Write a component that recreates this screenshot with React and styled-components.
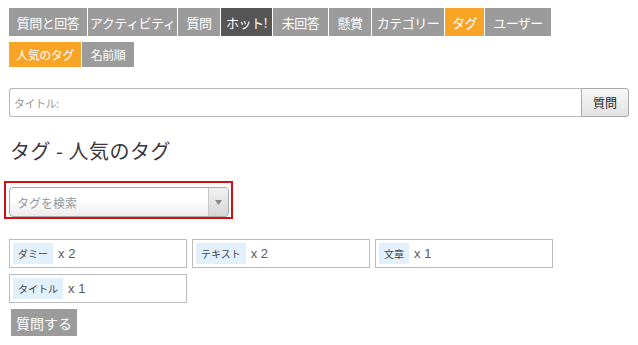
import React from "react";
import styled, { createGlobalStyle } from "styled-components";

const Global = createGlobalStyle`
  html, body { margin: 0; padding: 0; background: #fff; }
  body { font-family: "Noto Sans CJK JP", "Noto Sans", sans-serif; }
  * { box-sizing: border-box; }
`;

const Page = styled.div`
  padding: 8px 9px 0 9px;
  width: 638px;
  height: 345px;
  overflow: hidden;
`;

const NavRow = styled.div`
  display: flex;
  gap: 1px;
  margin-bottom: ${(p) => p.$mb || 0}px;
`;

const NavItem = styled.div`
  width: ${(p) => p.$w}px;
  height: ${(p) => p.$h}px;
  display: flex;
  align-items: center;
  justify-content: center;
  color: #fff;
  font-size: ${(p) => p.$fs}px;
  letter-spacing: -0.5px;
  white-space: nowrap;
  background: ${(p) =>
    p.$kind === "active" ? "#f8a527" : p.$kind === "hot" ? "#565656" : "#9b9b9b"};
`;

const SearchRow = styled.div`
  display: flex;
  margin-top: 21px;
  width: 620px;
  height: 29px;
`;

const TitleInput = styled.div`
  flex: 1;
  border: 1px solid #b9b9b9;
  border-right: none;
  border-radius: 3px 0 0 3px;
  display: flex;
  align-items: center;
  padding-left: 4px;
  font-size: 11px;
  color: #9a9a9a;
  letter-spacing: -0.5px;
`;

const AskButton = styled.div`
  width: 48px;
  border: 1px solid #a9a9a9;
  border-radius: 0 3px 3px 0;
  background: linear-gradient(#f7f7f7, #e2e2e2);
  display: flex;
  align-items: center;
  justify-content: center;
  font-size: 12px;
  color: #222;
`;

const Heading = styled.h1`
  margin: 20px 0 0 1px;
  font-size: 20px;
  font-weight: 400;
  line-height: 28px;
  color: #3a3640;
  letter-spacing: 0.5px;
`;

const Highlight = styled.div`
  margin: 16px 0 0 -5px;
  width: 229px;
  height: 38px;
  border: 2px solid #d20f12;
  padding: 4px 2px 0 3px;
`;

const Select = styled.div`
  width: 220px;
  height: 30px;
  border: 1px solid #a8a8a8;
  border-radius: 4px;
  background: linear-gradient(#ffffff 40%, #ececec);
  display: flex;
  overflow: hidden;
`;

const SelectText = styled.div`
  flex: 1;
  display: flex;
  align-items: center;
  padding-left: 7px;
  font-size: 12px;
  color: #999;
`;

const Arrow = styled.div`
  width: 20px;
  border-left: 1px solid #c8c8c8;
  background: linear-gradient(#f2f2f2, #d6d6d6);
  display: flex;
  align-items: center;
  justify-content: center;
`;

const TagGrid = styled.div`
  margin-top: 20px;
  display: grid;
  grid-template-columns: repeat(3, 178px);
  column-gap: 5px;
  row-gap: 6px;
`;

const TagBox = styled.div`
  height: 29px;
  border: 1px solid #bcbcbc;
  padding: 2px 3px;
  display: flex;
  align-items: center;
`;

const Pill = styled.span`
  height: 21px;
  background: #e2f0fb;
  padding: 0 5px;
  display: flex;
  align-items: center;
  font-size: 10px;
  color: #444;
`;

const Count = styled.span`
  margin-left: 5px;
  font-family: "Liberation Sans", Arial, sans-serif;
  font-size: 13px;
  color: #5a5a5a;
`;

const SubmitButton = styled.div`
  margin: 6px 0 0 2px;
  width: 66px;
  height: 27px;
  background: #9b9b9b;
  color: #fff;
  font-size: 14px;
  display: flex;
  align-items: center;
  justify-content: center;
`;

const nav1 = [
  ["質問と回答", 78],
  ["アクティビティ", 89],
  ["質問", 42],
  ["ホット!", 51, "hot"],
  ["未回答", 55],
  ["懸賞", 42],
  ["カテゴリー", 72],
  ["タグ", 39, "active"],
  ["ユーザー", 66],
];

const nav2 = [
  ["人気のタグ", 72, "active"],
  ["名前順", 52],
];

const tags = [
  ["ダミー", 2],
  ["テキスト", 2],
  ["文章", 1],
  ["タイトル", 1],
];

export default function App() {
  return (
    <>
      <Global />
      <Page>
        <NavRow $mb={6}>
          {nav1.map(([t, w, k]) => (
            <NavItem key={t} $w={w} $h={28} $fs={13} $kind={k}>
              {t}
            </NavItem>
          ))}
        </NavRow>
        <NavRow>
          {nav2.map(([t, w, k]) => (
            <NavItem key={t} $w={w} $h={25} $fs={12} $kind={k}>
              {t}
            </NavItem>
          ))}
        </NavRow>
        <SearchRow>
          <TitleInput>タイトル:</TitleInput>
          <AskButton>質問</AskButton>
        </SearchRow>
        <Heading>タグ - 人気のタグ</Heading>
        <Highlight>
          <Select>
            <SelectText>タグを検索</SelectText>
            <Arrow>
              <svg width="7" height="5" viewBox="0 0 7 5">
                <path d="M0 0h7L3.5 5z" fill="#888" />
              </svg>
            </Arrow>
          </Select>
        </Highlight>
        <TagGrid>
          {tags.map(([t, n]) => (
            <TagBox key={t}>
              <Pill>{t}</Pill>
              <Count>x {n}</Count>
            </TagBox>
          ))}
        </TagGrid>
        <SubmitButton>質問する</SubmitButton>
      </Page>
    </>
  );
}
